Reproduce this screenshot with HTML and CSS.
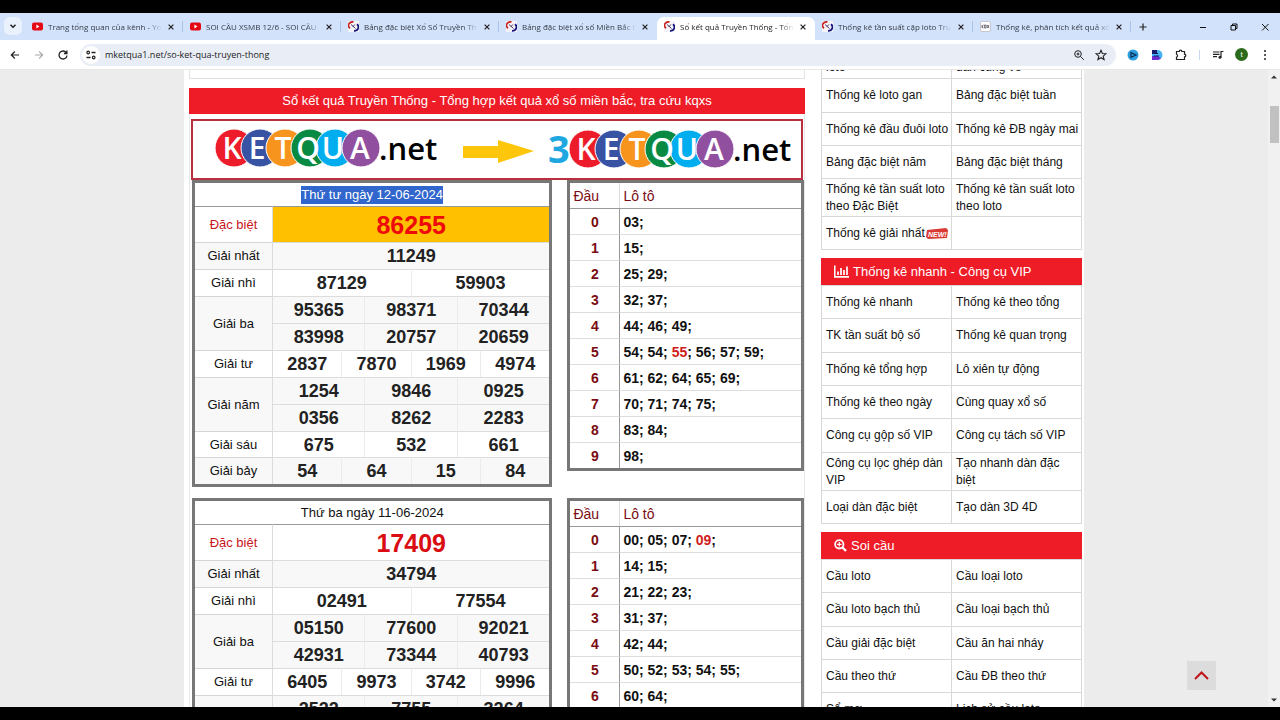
FILE: index.html
```html
<!DOCTYPE html>
<html lang="vi">
<head>
<meta charset="utf-8">
<title>Sổ kết quả Truyền Thống</title>
<link rel="stylesheet" href="styles.css">
</head>
<body>
<svg class="defs" width="0" height="0" aria-hidden="true">
  <symbol id="yt" viewBox="0 0 11 11"><rect y="1.5" width="11" height="8" rx="2" fill="#e50914"/><path d="M4.4 3.6 7.4 5.5 4.4 7.4z" fill="#fff"/></symbol>
  <symbol id="kq" viewBox="0 0 11 11"><rect width="11" height="11" fill="#f6f4f8"/><path d="M5.5.9A4.3 3.6 0 0 0 2 7.2" fill="none" stroke="#c8201e" stroke-width="1.7"/><path d="M9 3.2A4 3.8 0 0 1 6 9.9" fill="none" stroke="#14147c" stroke-width="1.8"/><path d="M3 3.5 7.5 7.5M6.8 3.5 4.8 6" stroke="#4a3a68" stroke-width="1"/></symbol>
  <symbol id="x" viewBox="0 0 8 8"><path d="M1.6 1.6 6.4 6.4M6.4 1.6 1.6 6.4" stroke="#222" stroke-width="1.2"/></symbol>
</svg>
<div class="browser">
  <nav class="tabs" aria-label="Tabs">
    <button class="tab-search" aria-label="Tìm thẻ"><svg viewBox="0 0 18 18"><path d="M6.5 7.8 9 10.2 11.5 7.8" fill="none" stroke="#222" stroke-width="1.5"/></svg></button>
    <div class="tab"><svg class="fav"><use href="#yt"/></svg><span>Trang tổng quan của kênh - You</span><button aria-label="Đóng"><svg><use href="#x"/></svg></button></div>
    <div class="tab"><svg class="fav"><use href="#yt"/></svg><span>SOI CẦU XSMB 12/6 - SOI CẦU</span><button aria-label="Đóng"><svg><use href="#x"/></svg></button></div>
    <div class="tab"><svg class="fav"><use href="#kq"/></svg><span>Bảng đặc biệt Xổ Số Truyền Th</span><button aria-label="Đóng"><svg><use href="#x"/></svg></button></div>
    <div class="tab before"><svg class="fav"><use href="#kq"/></svg><span>Bảng đặc biệt xổ số Miền Bắc t</span><button aria-label="Đóng"><svg><use href="#x"/></svg></button></div>
    <div class="tab active"><svg class="fav"><use href="#kq"/></svg><span>Sổ kết quả Truyền Thống - Tổn</span><button aria-label="Đóng"><svg><use href="#x"/></svg></button></div>
    <div class="tab"><svg class="fav"><use href="#kq"/></svg><span>Thống kê tần suất cặp loto Tru</span><button aria-label="Đóng"><svg><use href="#x"/></svg></button></div>
    <div class="tab"><svg class="fav" viewBox="0 0 11 11"><rect x=".5" y=".5" width="10" height="10" rx="1.5" fill="#fff" stroke="#c9c5cc"/><path d="M2 4v3M2 5.5 3.6 4M2 5.5 3.6 7M4.6 4h1.5v3h-1.5zM7.2 4 9 7M9 4 7.2 7" stroke="#544a58" stroke-width=".8" fill="none"/></svg><span>Thống kê, phân tích kết quả xổ</span><button aria-label="Đóng"><svg><use href="#x"/></svg></button></div>
    <button class="new-tab" aria-label="Thẻ mới"><svg viewBox="0 0 10 10"><path d="M5 1.5v7M1.5 5h7" stroke="#222" stroke-width="1.2"/></svg></button>
    <div class="window-buttons">
      <button aria-label="Thu nhỏ"><svg viewBox="0 0 10 10"><path d="M2 5.5h6" stroke="#111"/></svg></button>
      <button aria-label="Khôi phục"><svg viewBox="0 0 10 10"><path d="M2 3.5h4.5v4.5H2zM3.5 3.5V2H8v4.5H6.5" fill="none" stroke="#111"/></svg></button>
      <button aria-label="Đóng cửa sổ"><svg viewBox="0 0 10 10"><path d="M2 2l6.5 6.5M8.5 2 2 8.5" stroke="#111"/></svg></button>
    </div>
  </nav>
  <div class="toolbar">
    <button aria-label="Quay lại"><svg viewBox="0 0 12 12"><path d="M10 6H2.5M5.8 2.5 2.3 6l3.5 3.5" fill="none" stroke="#222" stroke-width="1.2"/></svg></button>
    <button aria-label="Tiến"><svg viewBox="0 0 12 12"><path d="M2 6h7.5M6.2 2.5 9.7 6 6.2 9.5" fill="none" stroke="#aaa" stroke-width="1.1"/></svg></button>
    <button aria-label="Tải lại"><svg viewBox="0 0 12 12"><path d="M9.5 4A4 4 0 1 0 10 6.5M9.9 1.5v3H6.9" fill="none" stroke="#222" stroke-width="1.3"/></svg></button>
    <div class="address">
      <button class="site" aria-label="Thông tin trang"><svg viewBox="0 0 12 12"><path d="M6.5 3.5h4M1.5 8.5h4" stroke="#222" stroke-width="1.3"/><circle cx="3.2" cy="3.5" r="1.3" fill="none" stroke="#222" stroke-width="1.2"/><circle cx="8.7" cy="8.5" r="1.3" fill="none" stroke="#222" stroke-width="1.2"/></svg></button>
      <input type="text" aria-label="Địa chỉ" value="mketqua1.net/so-ket-qua-truyen-thong">
      <button aria-label="Thu phóng"><svg viewBox="0 0 12 12"><circle cx="5" cy="5" r="3.3" fill="none" stroke="#222"/><path d="M7.4 7.4 10.8 10.8M3.5 5h3M5 3.5v3" stroke="#222"/></svg></button>
      <button aria-label="Đánh dấu"><svg viewBox="0 0 12 12"><path d="M6 1.3 7.4 4.5l3.5.3-2.7 2.3.9 3.4L6 8.7l-3.1 1.8.9-3.4L1.1 4.8l3.5-.3z" fill="none" stroke="#222" stroke-width="1.1"/></svg></button>
    </div>
    <div class="extensions">
      <button aria-label="Tiện ích 1"><svg viewBox="0 0 12 12"><circle cx="6" cy="6" r="5.5" fill="#2a9fe0"/><path d="M4 3.7 9 6 4 8.3z" fill="none" stroke="#0c2f58" stroke-width="1.3"/></svg></button>
      <button aria-label="Tiện ích 2"><svg viewBox="0 0 12 12"><path d="M1 1h5.5a4.8 4.8 0 0 1 0 10H1z" fill="#46b4f4"/><path d="M1 1h5v4H1z" fill="#1c1c6c"/><path d="M1 7h6l3 2.5-3 1.5H1z" fill="#6c2cd0"/><path d="M3 4.5h4M3 7h5" stroke="#122068"/></svg></button>
      <button aria-label="Tiện ích"><svg viewBox="0 0 12 12"><path d="M1.5 2.5h2.7a1.3 1.3 0 0 1 2.6 0h2.7v2.7a1.3 1.3 0 0 1 0 2.6v2.7h-8V8.2a1.6 1.6 0 0 0 0-3z" fill="none" stroke="#222" stroke-width="1.2"/></svg></button>
      <i class="divider"></i>
      <button aria-label="Phát nhạc"><svg viewBox="0 0 12 12"><path d="M1 3h6.5M1 5.3h6.5M1 7.6h4M9 8V2.5h2.5" fill="none" stroke="#222" stroke-width="1.2"/><circle cx="8" cy="8.3" r="1.5" fill="#222"/></svg></button>
      <button class="avatar" aria-label="Hồ sơ">t</button>
      <button aria-label="Menu"><svg viewBox="0 0 12 12"><g fill="#222"><circle cx="6" cy="2" r="1"/><circle cx="6" cy="6" r="1"/><circle cx="6" cy="10" r="1"/></g></svg></button>
    </div>
  </div>
  <div class="viewport">
    <div class="scroller">
      <div class="page">
        <main>
          <div class="strip"></div>
          <h1 class="bar">Sổ kết quả Truyền Thống - Tổng hợp kết quả xổ số miền bắc, tra cứu kqxs</h1>
          <div class="results">
            <svg class="banner" viewBox="0 0 608 57" role="img" aria-label="KETQUA.net, 3KETQUA.net">
              <g id="brand">
                <g stroke="#fff">
                  <circle cx="41" cy="27" r="19" fill="#ed1c2a"/><circle cx="67" cy="27" r="19" fill="#3953a4"/><circle cx="92" cy="27" r="19" fill="#f7941e"/><circle cx="117" cy="27" r="19" fill="#088a43"/><circle cx="142" cy="27" r="19" fill="#00aeef"/><circle cx="168" cy="27" r="19" fill="#91509f"/>
                </g>
                <g class="letters"><text x="39" y="38">K</text><text x="64" y="38">E</text><text x="90" y="38">T</text><text x="115" y="38">Q</text><text x="140" y="38">U</text><text x="167" y="38">A</text></g>
                <text class="net" x="186" y="39">.net</text>
              </g>
              <path d="M270 25h35v-6l36 11-36 12v-5h-35z" fill="#fdc60b"/>
              <text class="three" x="355" y="42">3</text>
              <use href="#brand" x="354" y="1"/>
            </svg>
            <div class="day">
              <table class="prizes">
                <colgroup><col class="label"><col span="12"></colgroup>
                <tr class="date"><th colspan="13"><mark>Thứ tư ngày 12-06-2024</mark></th></tr>
                <tr class="special hot"><th>Đặc biệt</th><td colspan="12">86255</td></tr>
                <tr class="alt"><th>Giải nhất</th><td colspan="12">11249</td></tr>
                <tr><th>Giải nhì</th><td colspan="6">87129</td><td colspan="6">59903</td></tr>
                <tr class="alt"><th rowspan="2">Giải ba</th><td colspan="4">95365</td><td colspan="4">98371</td><td colspan="4">70344</td></tr>
                <tr class="alt"><td colspan="4">83998</td><td colspan="4">20757</td><td colspan="4">20659</td></tr>
                <tr><th>Giải tư</th><td colspan="3">2837</td><td colspan="3">7870</td><td colspan="3">1969</td><td colspan="3">4974</td></tr>
                <tr class="alt"><th rowspan="2">Giải năm</th><td colspan="4">1254</td><td colspan="4">9846</td><td colspan="4">0925</td></tr>
                <tr class="alt"><td colspan="4">0356</td><td colspan="4">8262</td><td colspan="4">2283</td></tr>
                <tr class="short"><th>Giải sáu</th><td colspan="4">675</td><td colspan="4">532</td><td colspan="4">661</td></tr>
                <tr class="alt"><th>Giải bảy</th><td colspan="3">54</td><td colspan="3">64</td><td colspan="3">15</td><td colspan="3">84</td></tr>
              </table>
              <table class="loto">
                <thead><tr><th>Đầu</th><th>Lô tô</th></tr></thead>
                <tbody>
                <tr><th>0</th><td>03;</td></tr>
                <tr><th>1</th><td>15;</td></tr>
                <tr><th>2</th><td>25; 29;</td></tr>
                <tr><th>3</th><td>32; 37;</td></tr>
                <tr><th>4</th><td>44; 46; 49;</td></tr>
                <tr><th>5</th><td>54; 54; <b>55</b>; 56; 57; 59;</td></tr>
                <tr><th>6</th><td>61; 62; 64; 65; 69;</td></tr>
                <tr><th>7</th><td>70; 71; 74; 75;</td></tr>
                <tr><th>8</th><td>83; 84;</td></tr>
                <tr><th>9</th><td>98;</td></tr>
                </tbody>
              </table>
            </div>
            <div class="day">
              <table class="prizes">
                <colgroup><col class="label"><col span="12"></colgroup>
                <tr class="date"><th colspan="13">Thứ ba ngày 11-06-2024</th></tr>
                <tr class="special"><th>Đặc biệt</th><td colspan="12">17409</td></tr>
                <tr class="alt"><th>Giải nhất</th><td colspan="12">34794</td></tr>
                <tr><th>Giải nhì</th><td colspan="6">02491</td><td colspan="6">77554</td></tr>
                <tr class="alt"><th rowspan="2">Giải ba</th><td colspan="4">05150</td><td colspan="4">77600</td><td colspan="4">92021</td></tr>
                <tr class="alt"><td colspan="4">42931</td><td colspan="4">73344</td><td colspan="4">40793</td></tr>
                <tr><th>Giải tư</th><td colspan="3">6405</td><td colspan="3">9973</td><td colspan="3">3742</td><td colspan="3">9996</td></tr>
                <tr class="alt"><th></th><td colspan="4">2522</td><td colspan="4">7755</td><td colspan="4">3264</td></tr>
              </table>
              <table class="loto">
                <thead><tr><th>Đầu</th><th>Lô tô</th></tr></thead>
                <tbody>
                <tr><th>0</th><td>00; 05; 07; <b>09</b>;</td></tr>
                <tr><th>1</th><td>14; 15;</td></tr>
                <tr><th>2</th><td>21; 22; 23;</td></tr>
                <tr><th>3</th><td>31; 37;</td></tr>
                <tr><th>4</th><td>42; 44;</td></tr>
                <tr><th>5</th><td>50; 52; 53; 54; 55;</td></tr>
                <tr><th>6</th><td>60; 64;</td></tr>
                </tbody>
              </table>
            </div>
          </div>
        </main>
        <aside>
          <table class="links">
            <tr class="cut"><td><a href="#">loto</a></td><td><a href="#">dàn cùng về</a></td></tr>
            <tr><td><a href="#">Thống kê loto gan</a></td><td><a href="#">Bảng đặc biệt tuần</a></td></tr>
            <tr><td><a href="#">Thống kê đầu đuôi loto</a></td><td><a href="#">Thống kê ĐB ngày mai</a></td></tr>
            <tr><td><a href="#">Bảng đặc biệt năm</a></td><td><a href="#">Bảng đặc biệt tháng</a></td></tr>
            <tr class="tall"><td><a href="#">Thống kê tần suất loto theo Đặc Biệt</a></td><td><a href="#">Thống kê tần suất loto theo loto</a></td></tr>
            <tr><td><a href="#">Thống kê giải nhất</a><svg class="new" viewBox="0 0 22 11" role="img" aria-label="NEW!"><path d="M1 2 20 0 22 2 21 10 2 11 0 9z" fill="#d93a34"/><text x="2" y="9">NEW!</text></svg></td><td></td></tr>
          </table>
          <h2 class="bar"><svg viewBox="0 0 15 13"><path d="M.7.5v11.3H15M4 10V6.5M7 10V3M10 10V5M13 10V1.5" fill="none" stroke="#fff" stroke-width="1.7"/></svg> Thống kê nhanh - Công cụ VIP</h2>
          <table class="links">
            <tr><td><a href="#">Thống kê nhanh</a></td><td><a href="#">Thống kê theo tổng</a></td></tr>
            <tr><td><a href="#">TK tần suất bộ số</a></td><td><a href="#">Thống kê quan trọng</a></td></tr>
            <tr><td><a href="#">Thống kê tổng hợp</a></td><td><a href="#">Lô xiên tự động</a></td></tr>
            <tr><td><a href="#">Thống kê theo ngày</a></td><td><a href="#">Cùng quay xổ số</a></td></tr>
            <tr><td><a href="#">Công cụ gộp số VIP</a></td><td><a href="#">Công cụ tách số VIP</a></td></tr>
            <tr class="tall"><td><a href="#">Công cụ lọc ghép dàn VIP</a></td><td><a href="#">Tạo nhanh dàn đặc biệt</a></td></tr>
            <tr><td><a href="#">Loại dàn đặc biệt</a></td><td><a href="#">Tạo dàn 3D 4D</a></td></tr>
          </table>
          <h2 class="bar"><svg class="mag" viewBox="0 0 13 13"><circle cx="5.3" cy="5.3" r="4.2" fill="none" stroke="#fff" stroke-width="1.8"/><path d="M8.5 8.5 12 12" stroke="#fff" stroke-width="2.4"/><path d="M3 5.3h4.6M5.3 3v4.6" stroke="#fff" stroke-width="1.2"/></svg> Soi cầu</h2>
          <table class="links">
            <tr><td><a href="#">Cầu loto</a></td><td><a href="#">Cầu loại loto</a></td></tr>
            <tr><td><a href="#">Cầu loto bạch thủ</a></td><td><a href="#">Cầu loại bạch thủ</a></td></tr>
            <tr><td><a href="#">Cầu giải đặc biệt</a></td><td><a href="#">Cầu ăn hai nháy</a></td></tr>
            <tr><td><a href="#">Cầu theo thứ</a></td><td><a href="#">Cầu ĐB theo thứ</a></td></tr>
            <tr><td><a href="#">Sổ mơ</a></td><td><a href="#">Lịch sử cầu loto</a></td></tr>
          </table>
        </aside>
      </div>
    </div>
    <div class="scrollbar" aria-hidden="true">
      <svg viewBox="0 0 6 4"><path d="M0 3.5 3 .5l3 3z" fill="#333"/></svg>
      <i></i>
      <svg viewBox="0 0 6 4"><path d="M0 .5 3 3.5l3-3z" fill="#333"/></svg>
    </div>
    <button class="to-top" aria-label="Lên đầu trang"><svg viewBox="0 0 15 9"><path d="M1 8 7.5 1.5 14 8" fill="none" stroke="#c01418" stroke-width="2"/></svg></button>
  </div>
</div>
</body>
</html>
```
FILE: styles.css
```css
* { box-sizing: border-box; }
body {
  margin: 0;
  height: 100vh;
  padding: 13px 0;
  background: #000;
  overflow: hidden;
  font-family: "Liberation Sans", Arial, sans-serif;
}
button { border: 0; padding: 0; background: none; display: grid; place-items: center; font: inherit; }
svg { display: block; }
a { color: inherit; text-decoration: none; }
table { border-spacing: 0; table-layout: fixed; width: 100%; }
th, td { padding: 0; }
.defs { position: absolute; }
.browser { height: 100%; display: flex; flex-direction: column; background: #fff; }

/* Tab strip */
.tabs {
  display: flex;
  height: 27px;
  flex: none;
  padding-left: 4px;
  background: #d3e2fb;
  font: 8px "Open Sans", "Noto Sans", sans-serif;
  color: #333c48;
}
.tab-search { width: 18px; height: 18px; margin: 4px 3px 0 0; border-radius: 6px; background: #e9f1fd; }
.tab-search svg { width: 18px; height: 18px; }
.tab {
  flex: 0 1 158px;
  min-width: 0;
  display: flex;
  align-items: center;
  gap: 5px;
  margin-top: 4px;
  padding: 0 8px 4px 7px;
  background: linear-gradient(#a9c4ea, #a9c4ea) right 4px / 1px 11px no-repeat;
}
.tab .fav { width: 11px; height: 11px; flex: none; }
.tab span {
  flex: 1;
  overflow: hidden;
  white-space: nowrap;
  -webkit-mask-image: linear-gradient(90deg, #000 100px, transparent 114px);
  mask-image: linear-gradient(90deg, #000 100px, transparent 114px);
}
.tab button svg { width: 8px; height: 8px; }
.tab.before { background: none; }
.tab.active { background: #fff; border-radius: 7px 7px 0 0; color: #222; }
.new-tab { width: 24px; height: 27px; }
.new-tab svg { width: 10px; height: 10px; }
.window-buttons { margin-left: auto; display: flex; }
.window-buttons button { width: 31px; height: 27px; }
.window-buttons svg { width: 10px; height: 10px; }

/* Toolbar */
.toolbar { display: flex; align-items: center; height: 30px; flex: none; padding: 0 3px; border-bottom: 1px solid #e8e8ea; }
.toolbar button { width: 24px; height: 24px; }
.toolbar svg { width: 12px; height: 12px; }
.address { flex: 1; display: flex; align-items: center; height: 22px; margin-left: 5px; padding: 0 4px 0 2px; border-radius: 11px; background: #e9eef6; }
.address button { width: 22px; }
.address .site { width: 18px; height: 18px; border-radius: 9px; background: #fff; }
.address input { flex: 1; border: 0; padding: 0 5px; background: none; font: 9px "Open Sans", "Noto Sans", sans-serif; color: #222; }
.extensions { display: flex; align-items: center; padding-left: 5px; }
.divider { width: 1px; height: 10px; margin: 0 6px; background: #c8d6ee; }
.toolbar .avatar { width: 13px; height: 13px; margin: 0 5px; border-radius: 7px; background: #2c6b1c; color: #fff; font-size: 8px; }

/* Page area */
.viewport { position: relative; flex: 1; min-height: 0; display: flex; background: #ececec; }
.scroller { flex: 1; overflow: hidden; }
.page { display: flex; align-items: flex-start; gap: 16px; max-width: 900px; margin: -30px auto 0; padding: 0 2px 0 5px; background: #fff; }
main { flex: 616; }
aside { flex: 261; }
.bar { margin: 0; height: 26px; background: #ee1c27; color: #fff; font-size: 13px; font-weight: 400; line-height: 26px; }
h1.bar { text-align: center; }
.strip { height: 39px; margin-bottom: 9px; border: 1px solid #e2e2e2; }
.results { padding: 5px 0 0 1px; border: solid #e8e8e8; border-width: 0 1px; }
.banner { width: calc(100% - 1px); border: 2px solid #b8303f; background: #fff; }
.letters { font: 600 30px "Open Sans", "Noto Sans", sans-serif; fill: #fff; text-anchor: middle; }
.net { font: 600 31px "Open Sans", "Noto Sans", sans-serif; fill: #000; }
.three { font: 700 38px "Open Sans", "Noto Sans", sans-serif; fill: #1ea7e0; }

/* Result tables */
.day { display: grid; grid-template-columns: 361fr 237fr; gap: 15px; align-items: start; padding-left: 1px; margin-bottom: 11px; }
.prizes, .loto { border: 3px solid #777; background: #fff; }
.prizes .label { width: 77px; }
.prizes tr { height: 27px; }
.prizes tr.short { height: 26px; }
.prizes tr.date { height: 23px; }
.prizes tr.special { height: 36px; }
.prizes th { border-top: 1px solid #d5d5d5; font-size: 13px; font-weight: 400; line-height: 20px; color: #111; }
.prizes td { border: solid #dcdcdc; border-width: 1px 0 0 1px; text-align: center; font-size: 18px; font-weight: 700; line-height: 20px; color: #222; }
.prizes td + td { border-left-color: #ebebeb; }
.prizes .alt { background: #f8f8f8; }
.prizes .date th { border: 0; }
.prizes .special th { border-color: #999; color: #c8141c; }
.prizes .special td { border-top-color: #999; font-size: 25px; line-height: 30px; color: #d90d12; }
.prizes .hot td { background: #ffc000; color: #ee0a0a; }
mark { display: inline-block; height: 18px; line-height: 18px; background: #3166cc; color: #fff; }
.loto tr { height: 26px; }
.loto thead tr { height: 25px; }
.loto th, .loto td { border-top: 1px solid #ddd; font-size: 14px; line-height: 20px; }
.loto th { width: 49px; color: #7a0c12; }
.loto thead th { border-top: 0; padding-left: 3px; text-align: left; font-weight: 400; }
.loto thead th + th { width: auto; border-left: 1px solid #ddd; }
.loto td { padding-left: 3px; border-left: 1px solid #999; font-weight: 700; color: #111; }
.loto tbody tr:first-child > * { border-top-color: #999; }
.loto b { color: #d01c20; }

/* Sidebar */
.links { border-collapse: collapse; margin-bottom: 8px; }
.links tr { height: 33px; }
.links tr:nth-child(3n+2) { height: 34px; }
.links tr.tall { height: 38px; }
.links tr.cut { height: 38px; vertical-align: bottom; }
.links td { border: 1px solid #d8d8d8; padding: 0 0 0 4px; font-size: 12px; line-height: 17px; color: #111; }
.links .cut td { padding-bottom: 2px; }
.new { display: inline-block; width: 22px; height: 11px; margin-left: 1px; vertical-align: -2px; }
.new text { font: italic 700 7px "Liberation Sans", sans-serif; fill: #fff; }
h2.bar { display: flex; align-items: center; gap: 4px; height: 27px; padding-left: 13px; }
h2.bar svg { width: 15px; height: 13px; }
h2.bar svg.mag { width: 13px; }

/* Scroll controls */
.scrollbar { width: 12px; display: flex; flex-direction: column; align-items: center; padding: 5px 0; background: #f1f1f1; }
.scrollbar svg { width: 6px; height: 4px; }
.scrollbar i { width: 9px; height: 37px; margin: 27px 0 auto; background: #c1c1c1; }
.to-top { position: absolute; right: 64px; bottom: 17px; width: 29px; height: 29px; background: #dcdcdc; }
.to-top svg { width: 15px; height: 9px; }
```
